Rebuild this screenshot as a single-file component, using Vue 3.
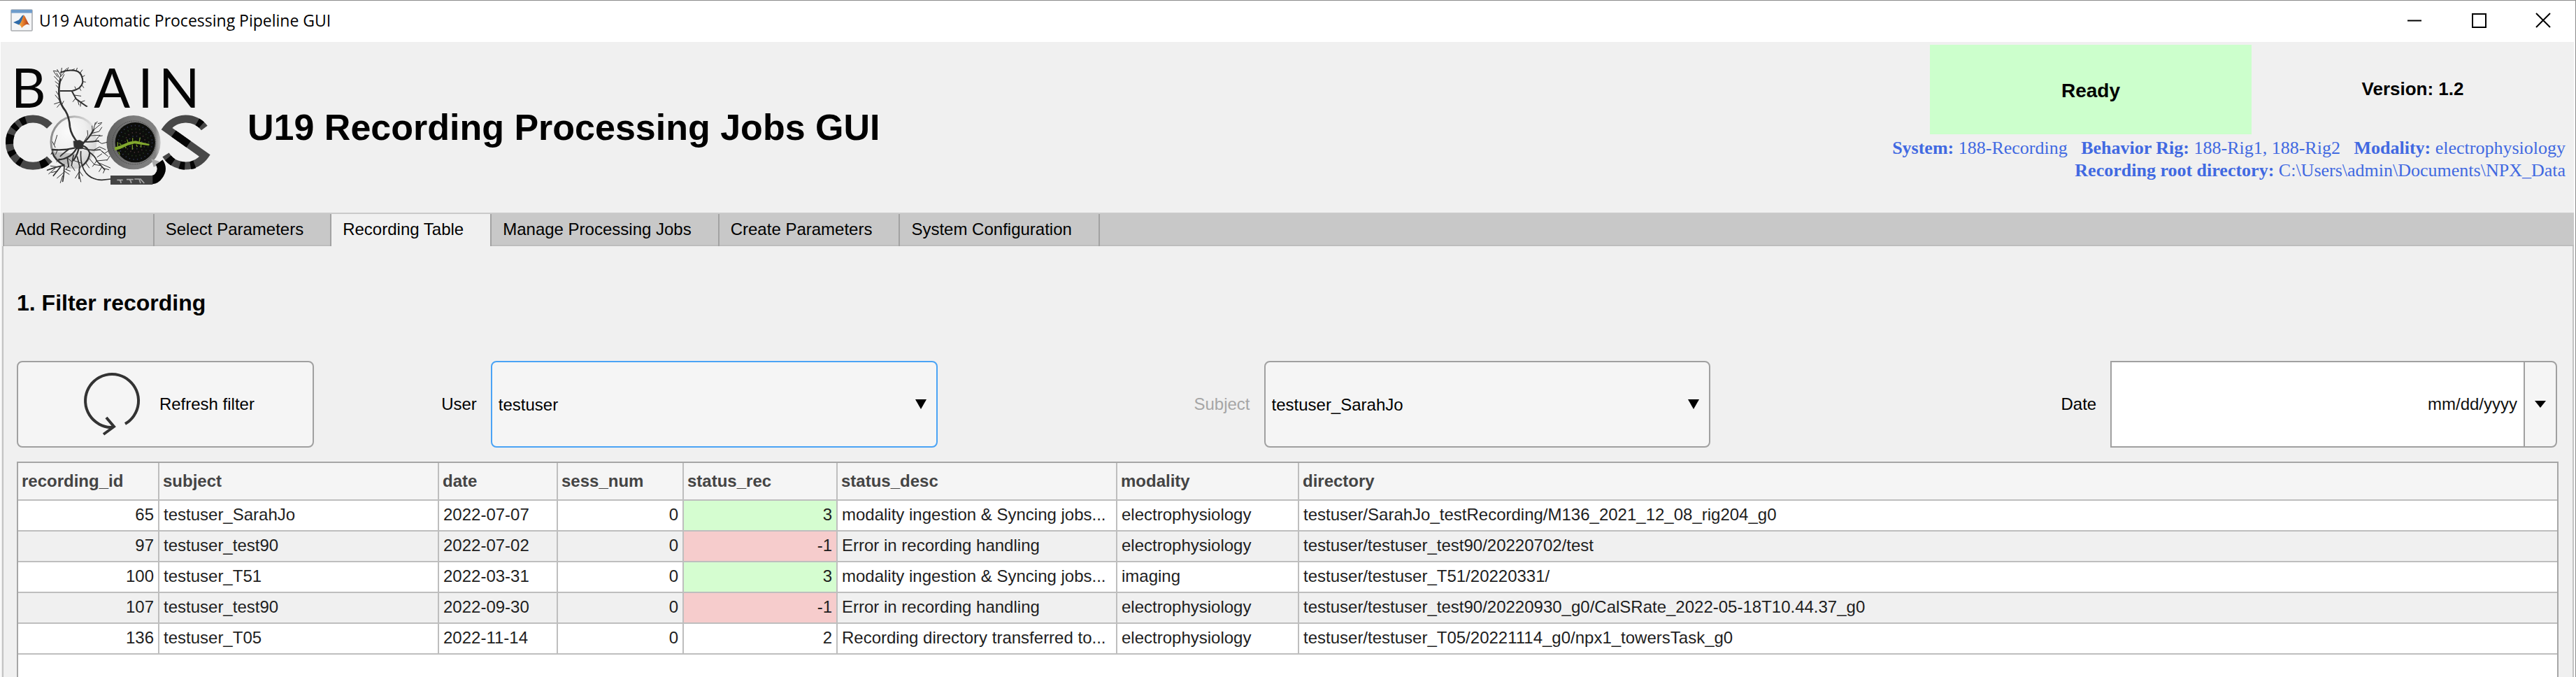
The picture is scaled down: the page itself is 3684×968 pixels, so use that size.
<script setup>
import { ref } from 'vue'

const tabs = [
  'Add Recording',
  'Select Parameters',
  'Recording Table',
  'Manage Processing Jobs',
  'Create Parameters',
  'System Configuration',
]
const activeTab = ref('Recording Table')

const user = ref('testuser')
const subject = ref('testuser_SarahJo')
const date = ref('')

const columns = [
  { key: 'recording_id', numeric: true },
  { key: 'subject' },
  { key: 'date' },
  { key: 'sess_num', numeric: true },
  { key: 'status_rec', numeric: true },
  { key: 'status_desc' },
  { key: 'modality' },
  { key: 'directory' },
]

const rows = [
  { recording_id: 65, subject: 'testuser_SarahJo', date: '2022-07-07', sess_num: 0, status_rec: 3, status_desc: 'modality ingestion & Syncing jobs...', modality: 'electrophysiology', directory: 'testuser/SarahJo_testRecording/M136_2021_12_08_rig204_g0' },
  { recording_id: 97, subject: 'testuser_test90', date: '2022-07-02', sess_num: 0, status_rec: -1, status_desc: 'Error in recording handling', modality: 'electrophysiology', directory: 'testuser/testuser_test90/20220702/test' },
  { recording_id: 100, subject: 'testuser_T51', date: '2022-03-31', sess_num: 0, status_rec: 3, status_desc: 'modality ingestion & Syncing jobs...', modality: 'imaging', directory: 'testuser/testuser_T51/20220331/' },
  { recording_id: 107, subject: 'testuser_test90', date: '2022-09-30', sess_num: 0, status_rec: -1, status_desc: 'Error in recording handling', modality: 'electrophysiology', directory: 'testuser/testuser_test90/20220930_g0/CalSRate_2022-05-18T10.44.37_g0' },
  { recording_id: 136, subject: 'testuser_T05', date: '2022-11-14', sess_num: 0, status_rec: 2, status_desc: 'Recording directory transferred to...', modality: 'electrophysiology', directory: 'testuser/testuser_T05/20221114_g0/npx1_towersTask_g0' },
]

function cellClass(col, row) {
  return {
    num: col.numeric,
    ok: col.key === 'status_rec' && row.status_rec === 3,
    bad: col.key === 'status_rec' && row.status_rec < 0,
  }
}
</script>

<template>
  <div class="window">
    <div class="titlebar">
      <svg class="app-icon" viewBox="0 0 32 32" aria-hidden="true">
        <defs>
          <linearGradient id="flame" x1="0" x2="1">
            <stop offset="0" stop-color="#f6b548" />
            <stop offset="0.45" stop-color="#e2762a" />
            <stop offset="1" stop-color="#9c2a16" />
          </linearGradient>
        </defs>
        <rect x="1" y="1" width="30" height="30" rx="1" fill="#f4f5f7" stroke="#a9acb0" stroke-width="1.6" />
        <rect x="1" y="1" width="30" height="4.6" fill="#6f9ccb" />
        <path d="M4 19 L12 15.500 L17 9 L19 8.500 L16 20 L12 22.500 Z" fill="#2f6ba8" />
        <path d="M19 8.500 C22 11 24 19 27.500 23 C24 21 22 21 16 27 C15 24 13.500 22.500 12 22.500 C15.500 20 17 12 19 8.500 Z" fill="url(#flame)" />
      </svg>
      <span class="window-title">U19 Automatic Processing Pipeline GUI</span>
      <button class="win-btn" type="button" aria-label="Minimize">
        <svg viewBox="0 0 22 22"><path d="M1 11.500H21" /></svg>
      </button>
      <button class="win-btn" type="button" aria-label="Maximize">
        <svg viewBox="0 0 22 22"><rect x="2" y="2" width="19" height="19" /></svg>
      </button>
      <button class="win-btn" type="button" aria-label="Close">
        <svg viewBox="0 0 22 22"><path d="M1 1L21 21M21 1L1 21" /></svg>
      </button>
    </div>

    <div class="body">
      <header class="header">
        <svg class="logo" viewBox="0 0 930 732" role="img" aria-label="Brain CoGS">
          <defs>
            <radialGradient id="glass" cx="0.35" cy="0.3" r="0.8">
              <stop offset="0" stop-color="#ffffff" />
              <stop offset="0.5" stop-color="#ededed" />
              <stop offset="1" stop-color="#b4b4b4" />
            </radialGradient>
            <linearGradient id="rim" x1="0" y1="0" x2="1" y2="0.2">
              <stop offset="0" stop-color="#858585" />
              <stop offset="0.6" stop-color="#c4c4c4" />
              <stop offset="1" stop-color="#efefef" />
            </linearGradient>
            <linearGradient id="scope" x1="0" y1="0" x2="1" y2="0">
              <stop offset="0" stop-color="#5f5f5f" />
              <stop offset="0.5" stop-color="#7c7c7c" />
              <stop offset="0.9" stop-color="#808080" />
              <stop offset="1" stop-color="#c8c8c8" />
            </linearGradient>
          </defs>
          <g class="wordmark">
            <text x="51" y="282">B</text>
            <text x="406" y="282">A</text>
            <text x="595" y="282">I</text>
            <text x="684" y="282">N</text>
          </g>

          <g fill="none" stroke-width="33">
            <path stroke="#474747" d="M216 360A101 101 0 1 0 216 502" />
            <path stroke="#050505" d="M114 335A101 101 0 0 0 92 345M76 358A101 101 0 0 0 61 374M49 397A101 101 0 0 0 44 438M50 466A101 101 0 0 0 60 486M80 508A101 101 0 0 0 96 519M176 527A101 101 0 0 0 204 513" />
            <path stroke="#474747" stroke-miterlimit="2" d="M880 369A101 101 0 0 0 718 372L882 488A101 101 0 0 1 714 484" />
            <path stroke="#050505" d="M868 356A101 101 0 0 0 850 343M748 393L812 439M838 525A101 101 0 0 1 820 530M796 532A101 101 0 0 1 774 528M745 516A101 101 0 0 1 724 497" />
          </g>

          <ellipse cx="322" cy="430" rx="100" ry="110" fill="url(#glass)" fill-opacity="0.65" stroke="url(#rim)" stroke-width="9" />
          <path d="M232 470Q250 515 300 530L330 480Z" fill="#8d8d8d" fill-opacity="0.45" />

          <circle cx="576" cy="431" r="116" fill="url(#scope)" />
          <circle cx="578" cy="432" r="93" fill="none" stroke="#3f3f3f" stroke-width="3" stroke-dasharray="4 4" />
          <circle cx="583" cy="431" r="86" fill="#0c0d0b" />
          <g fill="none" stroke="#2f3552" stroke-width="5" stroke-dasharray="4 13">
            <circle cx="583" cy="431" r="73" />
            <circle cx="583" cy="431" r="58" stroke="#263c22" />
            <circle cx="583" cy="431" r="43" stroke="#4a3338" />
            <circle cx="583" cy="431" r="28" />
          </g>
          <path d="M494 452L520 444L558 428L585 424L618 432L644 438L643 445L610 440L580 436L552 443L520 458L497 466Z" fill="#83aa2e" />
          <path d="M508 448V430M522 442L516 434M553 434L548 418M572 427V412M600 430L604 410M571 440V462M588 440L592 450M540 448L544 456M608 438V452M512 470L517 484" fill="none" stroke="#739528" stroke-width="4" />

          <path d="M652 502L686 512L684 528L662 536Z" fill="#a9a9a9" />
          <path d="M686 516Q706 545 684 574Q674 590 654 592" fill="none" stroke="#050505" stroke-width="36" />
          <rect x="477" y="573" width="181" height="39" fill="#444" />
          <path d="M505 592H530M515 592Q522 596 522 606M546 590H575M558 590Q566 596 566 606M580 588H600L606 606M604 586L622 606" fill="none" stroke="#a6a6a6" stroke-width="5" />

          <g class="neuron">
            <path stroke-width="8" d="M340 436Q308 400 303 365Q300 322 284 296Q262 268 258 240Q252 205 262 160" />
            <path stroke-width="5" d="M350 470Q346 530 372 562Q398 592 440 592L478 588" />
            <path stroke-width="6" d="M262 210H312Q352 202 358 172Q358 138 336 126Q300 116 264 130M312 212L330 245L374 276" />
            <path stroke-width="3" d="M262 160L246 134M262 150L268 112M258 172L236 148M258 184L240 170M262 140L248 118M264 168L278 140M256 200L244 186M262 150L280 128M250 150L234 128M252 126L232 124M272 130L290 114M290 124L296 110M308 122L322 116M330 124L334 112M346 134L356 120M356 150L366 144M358 170L370 172M354 184L362 196M344 198L350 208M330 204L324 192M322 228L350 232M328 240L316 256M336 248L342 270M350 258L348 276M348 258L366 252M360 268L378 276M258 250L240 228M260 258L236 266M262 264L248 280M254 228L244 212M268 270L276 254" />
            <path fill="#303030" d="M318 425L345 421L362 430L358 458L330 460L320 448Z" />
            <path stroke-width="7" d="M322 455Q280 466 228 462M330 458Q318 482 290 496Q272 506 256 504M340 460Q334 486 318 508M356 438Q386 412 404 378M360 446Q378 452 388 476Q386 506 358 530M228 476Q238 506 276 528" />
            <path stroke-width="5" d="M352 452Q376 468 432 462M296 462Q274 478 262 490M318 486L310 530M292 500L298 536M278 526Q280 560 272 598M276 530Q250 534 206 550M266 532L232 574M334 492L344 530L342 586M366 428Q390 430 426 424M388 474Q412 490 418 510L452 548" />
            <path stroke-width="3" d="M404 378L412 346M404 378L438 350M396 392L428 384L440 366M390 402L432 400M400 388L398 360M412 424L428 404L442 402M420 424L440 436L462 430M408 462L430 450L456 462M432 462L452 478L470 466M440 470L466 490M418 510L462 506M430 520L476 540M420 494L440 480M418 510L400 534M440 536L428 556M448 542L470 548M452 548L446 562M276 552L300 568M276 560L248 584M272 574L262 604M252 536L220 532M240 542L212 566M250 554L224 560M284 546L304 554M342 552L358 574M342 558L326 584M343 570L350 600M310 530L324 552M298 530L286 548M318 508L352 520M372 520L386 540M386 500L408 526L436 530M236 440L248 400M240 452L228 428M230 466L222 482M250 462L242 482M362 430L380 400L378 380M412 354L420 342M424 350L440 346M462 508L474 490M352 530L342 548M290 496L312 514M262 504L246 514" />
          </g>
        </svg>
        <h1>U19 Recording Processing Jobs GUI</h1>
        <div class="status">
          <div class="status-row">
            <div class="ready">Ready</div>
            <div class="version">Version: 1.2</div>
          </div>
          <div class="info">
            <div><b>System:</b> 188-Recording &nbsp; <b>Behavior Rig:</b> 188-Rig1, 188-Rig2 &nbsp; <b>Modality:</b> electrophysiology</div>
            <div><b>Recording root directory:</b> C:\Users\admin\Documents\NPX_Data</div>
          </div>
        </div>
      </header>

      <nav class="tabs" role="tablist">
        <button
          v-for="tab in tabs"
          :key="tab"
          type="button"
          role="tab"
          class="tab"
          :class="{ active: tab === activeTab }"
          :aria-selected="tab === activeTab"
          @click="activeTab = tab"
        >{{ tab }}</button>
      </nav>

      <main class="panel">
        <h2>1. Filter recording</h2>
        <div class="filters">
          <button class="refresh" type="button">
            <svg viewBox="0 0 86 96" aria-hidden="true">
              <path d="M64 76A38 38 0 1 0 43 81L47 80.500" />
              <path d="M37 67L48 80L33 91" />
            </svg>
            <span>Refresh filter</span>
          </button>

          <label for="user">User</label>
          <div class="drop">
            <select id="user" v-model="user" class="focused">
              <option>testuser</option>
            </select>
            <svg class="arrow" viewBox="0 0 16 14" aria-hidden="true"><path d="M0 0H16L8 14Z" /></svg>
          </div>

          <label for="subject" class="muted">Subject</label>
          <div class="drop">
            <select id="subject" v-model="subject">
              <option>testuser_SarahJo</option>
            </select>
            <svg class="arrow" viewBox="0 0 16 14" aria-hidden="true"><path d="M0 0H16L8 14Z" /></svg>
          </div>

          <label for="date">Date</label>
          <div class="date">
            <input id="date" v-model="date" type="text" placeholder="mm/dd/yyyy" />
            <button type="button" aria-label="Open calendar">
              <svg viewBox="0 0 16 10" aria-hidden="true"><path d="M0 0H16L8 10Z" /></svg>
            </button>
          </div>
        </div>

        <div class="table-box">
          <table>
            <colgroup>
              <col v-for="col in columns" :key="col.key" :class="'c-' + col.key" />
            </colgroup>
            <thead>
              <tr>
                <th v-for="col in columns" :key="col.key" scope="col">{{ col.key }}</th>
              </tr>
            </thead>
            <tbody>
              <tr v-for="row in rows" :key="row.recording_id">
                <td v-for="col in columns" :key="col.key" :class="cellClass(col, row)">{{ row[col.key] }}</td>
              </tr>
            </tbody>
          </table>
        </div>
      </main>
    </div>
  </div>
</template>

<style>
body {
  margin: 0;
  background: #fff;
}
</style>

<style scoped>
* {
  box-sizing: border-box;
}
.window {
  min-height: 100vh;
  display: flex;
  flex-direction: column;
  border-top: 1px solid #8c8c8c;
  border-right: 1px solid #8c8c8c;
  background: #fff;
  color: #000;
  font-family: "Liberation Sans", Arial, sans-serif;
  font-size: 24px;
}
button,
select,
input {
  font: inherit;
  color: inherit;
  margin: 0;
  outline: none;
}
.titlebar {
  display: flex;
  align-items: center;
  height: 59px;
  padding: 0 0 4px 15px;
}
.app-icon {
  width: 32px;
  height: 32px;
}
.window-title {
  flex: 1;
  margin-left: 9px;
  font-family: "Open Sans", "Noto Sans", sans-serif;
  font-size: 23px;
}
.win-btn {
  width: 92px;
  height: 55px;
  padding: 0;
  border: 0;
  background: none;
  display: grid;
  place-items: center;
}
.win-btn svg {
  width: 22px;
  height: 22px;
  fill: none;
  stroke: #000;
  stroke-width: 2;
}
.body {
  flex: 1;
  display: flex;
  flex-direction: column;
  margin: 0 2px 0 0;
  border-left: 1px solid #fff;
  background: #f0f0f0;
}
.header {
  display: flex;
  height: 244px;
}
.logo {
  width: 310px;
  height: 244px;
  margin-left: -2px;
}
.wordmark {
  font-family: Lato, sans-serif;
  font-size: 230px;
  fill: #050505;
}
.neuron {
  fill: none;
  stroke: #303030;
  stroke-linecap: round;
  stroke-linejoin: round;
}
h1 {
  flex: 1;
  margin: 0 0 0 45px;
  line-height: 244px;
  font-size: 52px;
}
.status {
  padding-top: 4px;
}
.status-row {
  display: flex;
  justify-content: flex-end;
  font-weight: bold;
  text-align: center;
  line-height: 128px;
}
.ready {
  width: 460px;
  height: 128px;
  padding-top: 2px;
  background: #ccffcc;
  font-size: 28px;
}
.version {
  width: 461px;
  font-size: 26px;
  line-height: 126px;
}
.info {
  padding: 4px 12px 0 0;
  text-align: right;
  color: #4169e1;
  font-family: "Liberation Serif", "Times New Roman", serif;
  font-size: 26px;
  line-height: 32px;
}
.tabs {
  display: flex;
  height: 48px;
  margin-left: 3px;
  border-top: 2px solid #cacaca;
  border-left: 2px solid #a9a9a9;
  background: linear-gradient(#c8c8c8 44px, #bdbdbd 44px);
}
.tab {
  height: 46px;
  padding: 0 38px 3px 16px;
  border: 0;
  border-right: 2px solid #a2a2a2;
  background: none;
  white-space: nowrap;
}
.tab.active {
  background: #f0f0f0;
}
.panel {
  flex: 1;
  display: flex;
  flex-direction: column;
  margin-left: 2px;
  padding: 61px 20px 0 19px;
  border: solid #c2c2c2;
  border-width: 0 2px;
}
h2 {
  margin: 0 0 63px;
  font-size: 32px;
  line-height: 40px;
}
.filters {
  display: grid;
  grid-template-columns: 425fr 253fr 639fr 467fr 639fr 572fr 639fr;
  height: 124px;
  margin-right: 2px;
  align-items: center;
}
.filters label {
  padding-right: 20px;
  text-align: right;
}
.filters label.muted {
  color: #a6a6a6;
}
.refresh {
  height: 124px;
  display: flex;
  align-items: center;
  justify-content: center;
  gap: 27px;
  padding: 0 0 0 6px;
  border: 2px solid #a0a0a0;
  border-radius: 8px;
  background: #f5f5f5;
}
.refresh svg {
  width: 86px;
  height: 96px;
  fill: none;
  stroke: #333;
  stroke-width: 4;
}
.drop {
  display: grid;
  align-items: center;
}
.drop select {
  grid-area: 1 / 1;
  appearance: none;
  width: 100%;
  height: 124px;
  padding: 0 9px;
  border: 2px solid #a0a0a0;
  border-radius: 8px;
  background: #f5f5f5;
}
.drop select.focused {
  border-color: #4aa3f5;
}
.arrow {
  grid-area: 1 / 1;
  justify-self: end;
  width: 16px;
  height: 14px;
  margin-right: 16px;
  pointer-events: none;
}
.date {
  display: flex;
  height: 124px;
}
.date input {
  flex: 1;
  min-width: 0;
  padding: 0 9px;
  border: 2px solid #a0a0a0;
  border-right: 0;
  border-radius: 0;
  background: #fff;
  text-align: right;
}
.date input::placeholder {
  color: #111;
  opacity: 1;
}
.date button {
  width: 48px;
  padding: 0;
  border: 2px solid #a0a0a0;
  border-radius: 0 8px 8px 0;
  background: #f5f5f5;
  display: grid;
  place-items: center;
}
.date button svg {
  width: 16px;
  height: 10px;
}
.table-box {
  flex: 1;
  margin-top: 20px;
  border: 2px solid #a6a6a6;
  border-bottom: 0;
  background: #fff;
}
table {
  width: 100%;
  table-layout: fixed;
  border-collapse: separate;
  border-spacing: 0;
}
.c-recording_id { width: 202px; }
.c-subject { width: 400px; }
.c-date { width: 170px; }
.c-sess_num { width: 180px; }
.c-status_rec { width: 220px; }
.c-status_desc { width: 400px; }
.c-modality { width: 260px; }
th,
td {
  padding: 0 6px 2px;
  border: solid #bebebe;
  border-width: 0 2px 2px 0;
  line-height: 40px;
  text-align: left;
  white-space: nowrap;
  overflow: hidden;
  color: #1e1e1e;
}
th {
  padding: 0 5px;
  line-height: 52px;
  background: #f5f5f5;
  color: #444;
}
th:last-child,
td:last-child {
  border-right: 0;
}
tbody tr:nth-child(even) {
  background: #f0f0f0;
}
td.num {
  text-align: right;
}
td.ok {
  background: #d5fdd0;
}
td.bad {
  background: #f6cccc;
}
</style>
